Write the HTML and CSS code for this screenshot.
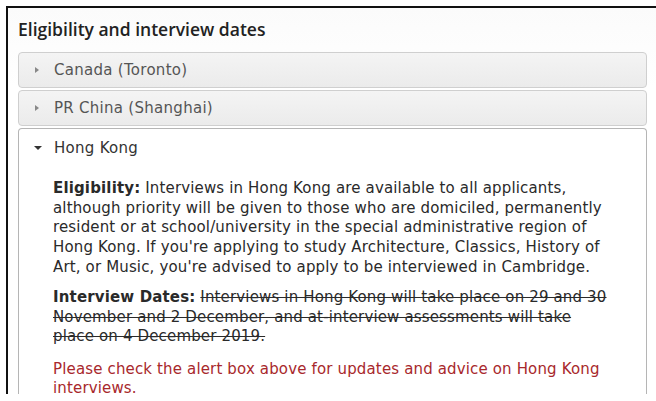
FILE: index.html
```html
<!DOCTYPE html>
<html>
<head>
<meta charset="utf-8">
<link rel="stylesheet" href="styles.css">
</head>
<body>
<div class="frame">
  <h2 class="title">Eligibility and interview dates</h2>
  <div class="accordion">
    <div class="item closed">
      <div class="item-head"><span class="arrow-right"></span>Canada (Toronto)</div>
    </div>
    <div class="item closed">
      <div class="item-head"><span class="arrow-right"></span>PR China (Shanghai)</div>
    </div>
    <div class="item open">
      <div class="item-head"><span class="arrow-down"></span>Hong Kong</div>
      <div class="item-body">
        <p><strong>Eligibility:</strong> Interviews in Hong Kong are available to all applicants, although priority will be given to those who are domiciled, permanently resident or at school/university in the special administrative region of Hong Kong. If you're applying to study Architecture, Classics, History of Art, or Music, you're advised to apply to be interviewed in Cambridge.</p>
        <p><strong>Interview Dates:</strong> <del>Interviews in Hong Kong will take place on 29 and 30 November and 2 December, and at-interview assessments will take place on 4 December 2019.</del></p>
        <p class="alert">Please check the alert box above for updates and advice on Hong Kong interviews.</p>
      </div>
    </div>
  </div>
</div>
</body>
</html>
```
FILE: styles.css
```css
html, body {
  margin: 0;
  padding: 0;
  background: #fff;
  overflow: hidden;
}
body {
  width: 656px;
  height: 401px;
}
.frame {
  margin: 6px 0 0 6px;
  border-top: 2px solid #111;
  border-left: 2px solid #111;
  height: 388px;
  padding: 9px 9px 0 10px;
  box-sizing: border-box;
  background: linear-gradient(#fbfbfb, #fff 80px);
  overflow: hidden;
}
.title {
  margin: 0 0 11px 0;
  font-family: "Open Sans", sans-serif;
  font-weight: 600;
  font-size: 17.5px;
  line-height: 24px;
  color: #222;
}
.accordion {
  display: flex;
  flex-direction: column;
  gap: 2px;
}
.item {
  border: 1px solid #cfcfcf;
  border-radius: 4px;
}
.item.closed {
  background: linear-gradient(#f4f4f4, #ebebeb);
}
.item.open {
  border-color: #b5b5b5;
  background: #fff;
  border-bottom: none;
  border-radius: 4px 4px 0 0;
}
.item-head {
  display: flex;
  align-items: center;
  height: 34px;
  padding-left: 15px;
  font-family: "DejaVu Sans", Verdana, sans-serif;
  font-size: 15px;
  letter-spacing: 0.28px;
  color: #555;
}
.item.open .item-head {
  height: 37px;
  color: #333;
}
.arrow-right {
  width: 0;
  height: 0;
  border-top: 3px solid transparent;
  border-bottom: 3px solid transparent;
  border-left: 4px solid #888;
  margin-right: 15px;
  margin-left: 1px;
}
.arrow-down {
  width: 0;
  height: 0;
  border-left: 4px solid transparent;
  border-right: 4px solid transparent;
  border-top: 4px solid #333;
  margin-right: 12px;
}
.item-body {
  padding: 13px 33px 0 34px;
  font-family: "DejaVu Sans", Verdana, sans-serif;
  font-size: 15px;
  letter-spacing: 0.15px;
  line-height: 19.7px;
  color: #2a2a2a;
}
.item-body p {
  margin: 0 0 10.5px 0;
}
.item-body del {
  text-decoration-thickness: 1.2px;
}
.item-body .alert {
  margin-top: 12.5px;
  color: #a8282c;
}
```
